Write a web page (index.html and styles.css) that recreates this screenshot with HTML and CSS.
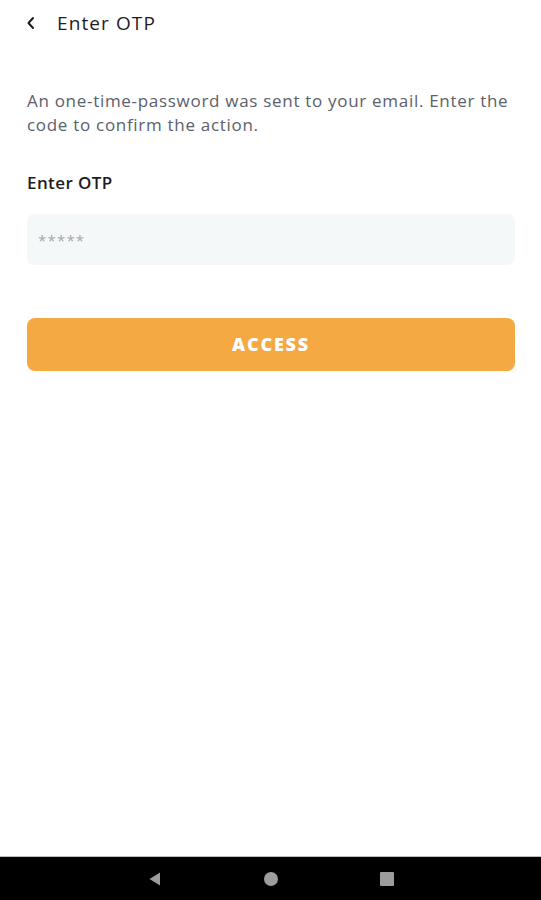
FILE: index.html
```html
<!DOCTYPE html>
<html lang="en">
<head>
    <meta charset="UTF-8">
    <meta name="viewport" content="width=device-width, initial-scale=1.0">
    <title>Enter OTP</title>
    <link rel="stylesheet" href="styles.css">
</head>
<body>

<div class="screen">
    <!-- Верхняя панель -->
    <div class="top-bar">
        <span class="back-btn">
            <svg width="10" height="14" viewBox="0 0 10 14">
                <path d="M7 2 L2.5 7 L7 12" fill="none" stroke="#1d1d1f" stroke-width="2" stroke-linecap="round" stroke-linejoin="round"/>
            </svg>
        </span>
        <span class="top-title">Enter OTP</span>
    </div>

    <div class="content">
        <p class="hint">An one-time-password was sent to your email. Enter the code to confirm the action.</p>

        <div class="field-label">Enter OTP</div>
        <div class="otp-input">*****</div>

        <button class="access-btn">ACCESS</button>
    </div>

    <!-- Системная навигация -->
    <div class="nav-bar">
        <svg width="16" height="16" viewBox="0 0 16 16"><path d="M13 1.5 L2.5 8 L13 14.5 Z" fill="#9c9c9c"/></svg>
        <svg width="16" height="16" viewBox="0 0 16 16"><circle cx="8" cy="8" r="7" fill="#9c9c9c"/></svg>
        <svg width="16" height="16" viewBox="0 0 16 16"><rect x="1" y="1" width="14" height="14" rx="1" fill="#9c9c9c"/></svg>
    </div>
</div>

</body>
</html>
```

FILE: styles.css
```css
body {
    margin: 0;
    padding: 0;
    background-color: #fff;
    font-family: "Open Sans", Arial, sans-serif;
    color: #1d1d1f;
}
.screen {
    display: flex;
    flex-direction: column;
    height: 900px;
}
.top-bar {
    display: flex;
    align-items: center;
    height: 46px;
    padding-left: 26px;
}
.back-btn {
    display: flex;
    width: 31px;
}
.top-title {
    font-size: 19px;
    font-weight: 500;
    letter-spacing: 1.1px;
}
.content {
    flex: 1;
    padding: 43px 26px 0 27px;
}
.hint {
    margin: 0;
    font-size: 17px;
    line-height: 24px;
    color: #5c606b;
    letter-spacing: 0.7px;
}
.field-label {
    margin-top: 34px;
    font-size: 17px;
    font-weight: 600;
    line-height: 24px;
    letter-spacing: 0.4px;
}
.otp-input {
    margin-top: 19px;
    height: 51px;
    display: flex;
    align-items: center;
    padding-left: 11px;
    background-color: #f5f8f9;
    border-radius: 7px;
    color: #a8a8a8;
    font-size: 15px;
    letter-spacing: 1.2px;
}
.access-btn {
    display: block;
    width: 100%;
    margin-top: 53px;
    height: 53px;
    padding-bottom: 3px;
    border: none;
    border-radius: 8px;
    background-color: #f4a942;
    color: #fff;
    font-family: "Open Sans", Arial, sans-serif;
    font-size: 18px;
    font-weight: 800;
    letter-spacing: 1.8px;
}
.nav-bar {
    height: 43px;
    background-color: #000;
    border-top: 1px solid #bdbdbd;
    display: flex;
    align-items: center;
    justify-content: center;
    gap: 100px;
}
```
